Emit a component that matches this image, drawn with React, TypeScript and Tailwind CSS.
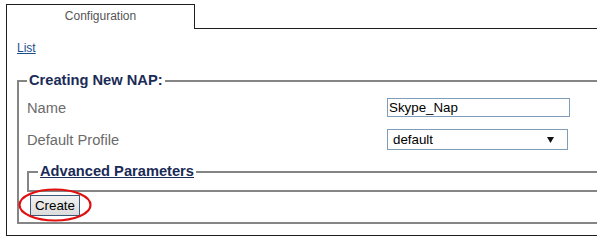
export default function App() {
  return (
    <div className="w-[604px] h-[240px] bg-white pt-[4px] pl-[6px] font-['Liberation_Sans',Arial,sans-serif] overflow-hidden">
      <div className="w-[591px]">
        <div className="flex h-[25px]">
          <div className="w-[189px] border-t border-l border-r border-[#1e1e1e] text-center text-[12px] leading-[23px] text-[#555]">
            Configuration
          </div>
          <div className="flex-1 border-b border-[#1e1e1e]" />
        </div>
        <div className="border-l border-b border-[#1e1e1e] h-[207px] pl-[10px] pt-[12px]">
          <a href="#" className="block w-fit text-[12px] leading-[14px] text-[#1c4e8c] underline">
            List
          </a>
          <fieldset className="mt-[17px] border-2 border-r-0 border-[#858585] pl-[8px] pb-[6px]">
            <legend className="px-[2px] text-[14.67px] leading-[17px] font-bold text-[#1b2b57]">
              Creating New NAP:
            </legend>
            <div className="pt-[9px]">
              <div className="flex items-center h-[19px]">
                <div className="w-[360px] text-[14.67px] text-[#6b6b6b]">Name</div>
                <input
                  readOnly
                  value="Skype_Nap"
                  className="w-[183px] h-[19px] border border-[#7f9db9] px-[1px] text-[13.33px] text-black bg-white outline-none font-['Liberation_Sans',Arial,sans-serif]"
                />
              </div>
              <div className="flex items-center h-[21px] mt-[12px]">
                <div className="w-[360px] text-[14.67px] text-[#6b6b6b]">Default Profile</div>
                <div className="w-[181px] h-[21px] border border-[#7f9db9] flex items-center pl-[5px] pr-[13px] text-[13.33px] text-black bg-white">
                  <span className="flex-1">default</span>
                  <svg width="7" height="6" viewBox="0 0 7 6">
                    <polygon points="0,0 7,0 3.5,6" fill="#111" />
                  </svg>
                </div>
              </div>
              <fieldset className="mt-[13px] border-2 border-r-0 border-[#858585] pl-[9px] pb-[10px]">
                <legend className="px-[2px] text-[14.67px] leading-[17px] font-bold text-[#1b2b57] underline">
                  Advanced Parameters
                </legend>
              </fieldset>
              <div className="relative flex w-fit ml-[3px] mt-[3px]">
                <button className="w-[50px] h-[21px] border border-[#3c5a78] bg-gradient-to-b from-[#f2f2f2] to-[#dcdcdc] text-[13.33px] leading-[19px] text-black text-center">
                  Create
                </button>
                <svg
                  className="absolute left-[-12px] top-[-7px] pointer-events-none"
                  width="74"
                  height="34"
                  viewBox="0 0 74 34"
                >
                  <ellipse cx="37" cy="17" rx="35.5" ry="15.5" fill="none" stroke="#e01010" strokeWidth="2.2" />
                </svg>
              </div>
            </div>
          </fieldset>
        </div>
      </div>
    </div>
  );
}
